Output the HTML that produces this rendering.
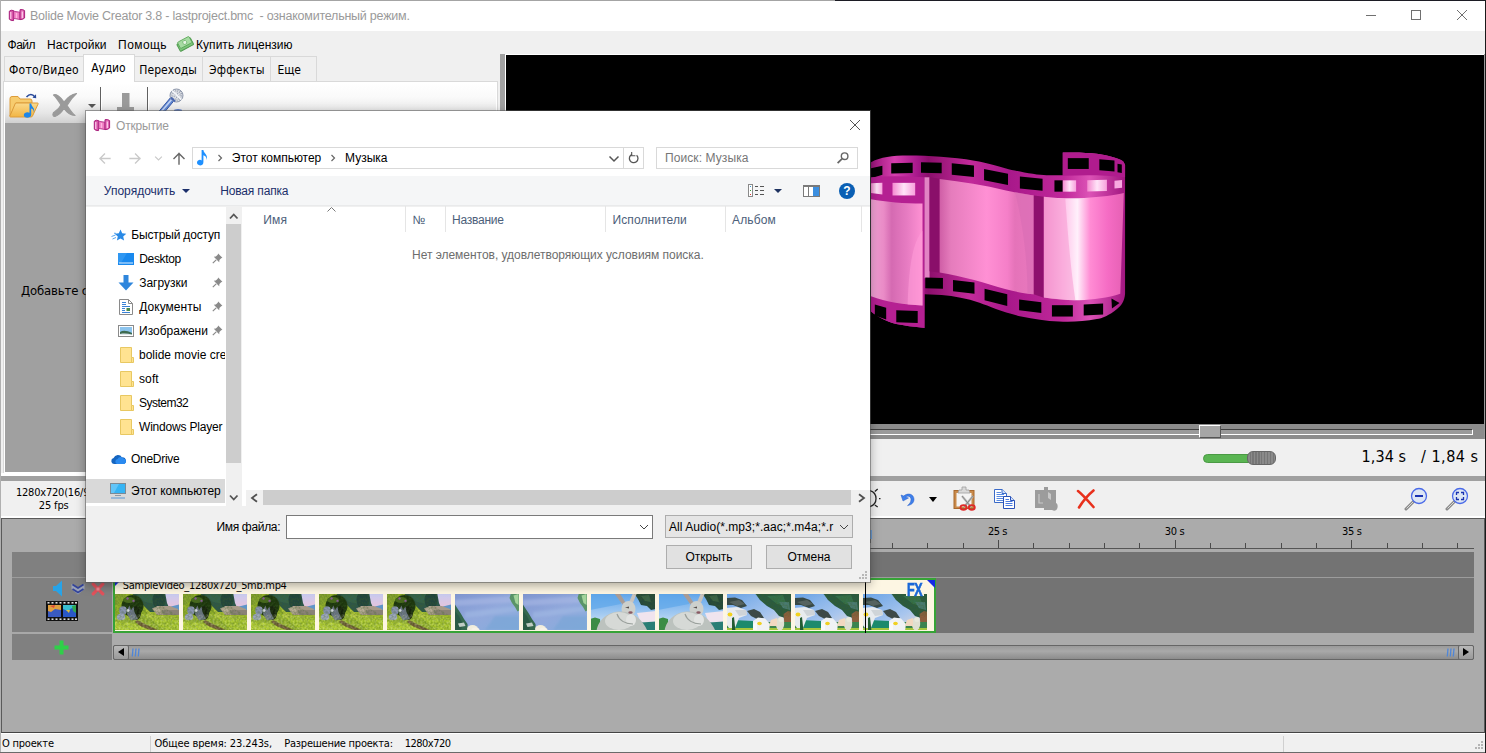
<!DOCTYPE html>
<html lang="ru"><head><meta charset="utf-8"><title>Bolide Movie Creator</title>
<style>
*{box-sizing:border-box;margin:0;padding:0}
html,body{width:1486px;height:753px;overflow:hidden;background:#f0f0f0}
body{font-family:"Liberation Sans",sans-serif;font-size:13px;color:#000;position:relative}
.a{position:absolute;white-space:nowrap}
.t{position:absolute;white-space:nowrap;line-height:1}
#titlebar{left:0;top:0;width:1486px;height:31px;background:#fff}
#menubar{left:0;top:31px;width:1486px;height:24px;background:#f0f0f0}
.tab{position:absolute;top:56px;height:26px;background:#f0f0f0;border:1px solid #d9d9d9;border-bottom:none;font-size:11px;font-family:"DejaVu Sans Condensed","Liberation Sans",sans-serif;line-height:23px;text-align:center;white-space:nowrap}
.tab.act{top:54px;height:28px;background:#fff;border-color:#d9d9d9;z-index:2;line-height:24px}

#dlg{left:86px;top:111px;width:784px;height:471px;background:#f0f0f0;box-shadow:0 0 0 1px rgba(90,90,90,.55),0 3px 10px rgba(0,0,0,.35);z-index:50;font-size:12px}
#dlg .t{font-size:12px}
.nav{position:absolute;white-space:nowrap;line-height:1;font-size:12px;color:#000}
.hdr{position:absolute;white-space:nowrap;line-height:1;font-size:12px;color:#4c607a;top:103px}
.csep{position:absolute;top:95px;width:1px;height:26px;background:#e5e5e5}
.btn{position:absolute;height:24px;border:1px solid #adadad;background:#e1e1e1;text-align:center;line-height:22px;font-size:12px}
</style></head><body>

<svg width="0" height="0" style="position:absolute">
<defs>
<filter id="b1" x="-10%" y="-10%" width="120%" height="120%"><feGaussianBlur stdDeviation="0.7"/></filter>
<filter id="tx" x="0" y="0" width="100%" height="100%"><feTurbulence type="fractalNoise" baseFrequency="0.45" numOctaves="2" seed="7" result="n"/><feColorMatrix in="n" type="matrix" values="0 0 0 0 0.05  0 0 0 0 0.12  0 0 0 0 0.02  1.6 0 0 0 -0.55" result="c"/><feComposite in="c" in2="SourceGraphic" operator="in"/></filter><filter id="ty" x="0" y="0" width="100%" height="100%"><feTurbulence type="fractalNoise" baseFrequency="0.5" numOctaves="2" seed="11" result="n"/><feColorMatrix in="n" type="matrix" values="0 0 0 0 0.95  0 0 0 0 1  0 0 0 0 0.55  0 1.6 0 0 -0.6" result="c"/><feComposite in="c" in2="SourceGraphic" operator="in"/></filter>
<filter id="b2" x="-10%" y="-10%" width="120%" height="120%"><feGaussianBlur stdDeviation="1.2"/></filter>
<linearGradient id="skyA" x1="0" y1="0" x2="0" y2="1"><stop offset="0" stop-color="#c4ccf2"/><stop offset="1" stop-color="#e6c4dc"/></linearGradient>
<linearGradient id="grassA" x1="0" y1="0" x2="0" y2="1"><stop offset="0" stop-color="#8aa628"/><stop offset="1" stop-color="#b4cc36"/></linearGradient>
<linearGradient id="skyB" x1="0" y1="0" x2="1" y2="1"><stop offset="0" stop-color="#8096d0"/><stop offset="0.5" stop-color="#92a9dc"/><stop offset="1" stop-color="#86addc"/></linearGradient>
<linearGradient id="skyC" x1="0" y1="0" x2="0" y2="1"><stop offset="0" stop-color="#62a6ea"/><stop offset="0.6" stop-color="#a8cdf2"/><stop offset="1" stop-color="#e4eefa"/></linearGradient>
<linearGradient id="skyD" x1="0" y1="0" x2="1" y2="1"><stop offset="0" stop-color="#6aa4e6"/><stop offset="0.6" stop-color="#a9c6ee"/><stop offset="1" stop-color="#eedcd2"/></linearGradient>
<symbol id="thA" viewBox="0 0 64 36" preserveAspectRatio="none">
 <rect width="64" height="36" fill="url(#grassA)"/>
 <g filter="url(#b1)">
 <rect x="18" y="-2" width="48" height="20" fill="#2d5648"/>
 <path d="M20 -2H40L44 4L40 10L30 8Z" fill="#35624e"/>
 <path d="M50 -2H66V14L60 13L54 13.500L52 9Z" fill="url(#skyA)"/>
 <path d="M56 12.500L66 10V17H56Z" fill="#5f95c8"/>
 <ellipse cx="44" cy="6" rx="6.500" ry="9" fill="#24443c"/>
 <path d="M-2 -2H13L21 3L30 13L36 19L46 24L66 23V38H-2Z" fill="#93b02a"/>
 <path d="M-2 -2H12L9 5L4 10L-2 12Z" fill="#88a52e"/>
 <ellipse cx="17.500" cy="12" rx="11" ry="11" fill="#1f350e"/>
 <ellipse cx="21" cy="19" rx="5" ry="7" fill="#142208"/>
 <ellipse cx="14" cy="6" rx="6" ry="3" fill="#486a1c"/>
 <circle cx="12.500" cy="4.500" r="1.200" fill="#8a5a9a"/><circle cx="18.500" cy="7" r="1.200" fill="#8a5a9a"/>
 <path d="M37 14.500L43 12L55 12L63 15V21H42Z" fill="#a79a88"/>
 <path d="M47 16H64V21H48Z" fill="#8a8276"/>
 <path d="M38 14.500L43 12L47 16L42 20Z" fill="#b8ac98"/>
 <ellipse cx="8" cy="16.500" rx="3.800" ry="4.200" fill="#8a94b2"/>
 <ellipse cx="6" cy="23" rx="4.200" ry="3.200" fill="#98a2bc"/>
 <path d="M12.500 15L14.500 11.500L16 16L18.500 12.500L19.500 18L23 25L16 26.500L12 20Z" fill="#6c7488"/>
 <circle cx="13" cy="16.500" r="1.500" fill="#d8dce4"/>
 <path d="M22 26L34 32L44 36.500H31L20 28Z" fill="#6a5630"/>
 <path d="M-2 27L20 30L40 38H-2Z" fill="#b0cc32"/>
 <path d="M28 20L44 24L66 24V38H52Z" fill="#a4c22c"/>
 <path d="M30 14L36 19L42 23L34 24Z" fill="#b4c83a"/>
 </g>
 <path d="M0 0H50V14L64 22V36H0Z" filter="url(#tx)" opacity=".55"/>
 <path d="M0 22L30 20L64 24V36H0Z" filter="url(#ty)" opacity=".45"/>
</symbol>
<symbol id="thB" viewBox="0 0 64 36" preserveAspectRatio="none">
 <rect width="64" height="36" fill="url(#skyB)"/>
 <g filter="url(#b2)"><path d="M0 6L64 2V8L0 12Z" fill="#a8b8e4" opacity=".6"/><path d="M10 18L64 12V17L10 24Z" fill="#a4bce6" opacity=".5"/><path d="M40 22H64V36H30Z" fill="#74a4d6" opacity=".55"/></g>
 <g filter="url(#b1)">
 <path d="M56 -1H65V16L62.500 17.500L60 13L57 9L54.500 4Z" fill="#5a9468"/>
 <path d="M58.500 1.500L63.500 0V11L60.500 9Z" fill="#a4d49c"/>
 <path d="M-1 9L1.500 13L5.500 19L9 25L12.500 30L13 37H-1Z" fill="#34684e"/>
 <path d="M-1 16L4 22L8 30L6 36H-1Z" fill="#2c5a44"/>
 <path d="M3 29.500L9 28.500L10.500 32L4.500 33Z" fill="#c0cdc4"/>
 <ellipse cx="17.500" cy="35" rx="5.500" ry="4" fill="#f1eddc"/>
 <ellipse cx="20.500" cy="36" rx="4" ry="2.500" fill="#f6f2e6"/>
 </g>
</symbol>
<symbol id="thC" viewBox="0 0 64 36" preserveAspectRatio="none">
 <rect width="64" height="36" fill="url(#skyC)"/>
 <g filter="url(#b1)">
 <path d="M-1 -1H30V10L-1 16Z" fill="#5ea6ea" opacity=".7"/>
 <path d="M43 -1H65V15L60 16L56 12L50 11L47 5Z" fill="#28493a"/>
 <path d="M50 2L58 1L60 8L54 7Z" fill="#3a6248"/>
 <path d="M46 19L65 17V29H50Z" fill="#f0e4ee"/>
 <path d="M-1 25L4 23.500L9 25L10 37H-1Z" fill="#3a8c44"/>
 <path d="M50 28.500L65 27.500V37H50Z" fill="#2c7e74"/>
 <path d="M23 -1L28.500 -1L34.500 8.500L31.500 10.500Z" fill="#a89c96"/>
 <path d="M37.500 9.500L42 -1L46 -1L41 11Z" fill="#c8c2bc"/>
 <ellipse cx="37.500" cy="15" rx="7" ry="8" fill="#cdd0cc"/>
 <path d="M5.500 37C7 25 18 17.500 30 17.500C44 17.500 52 27 56.500 37Z" fill="#bcc2be"/>
 <ellipse cx="28" cy="27" rx="14" ry="9" fill="#d6d9d6"/>
 <ellipse cx="40" cy="26" rx="5" ry="6" fill="#e2e4e2"/>
 <path d="M34 13.500L38 12.500L38 14.500Z" fill="#56504e"/>
 <ellipse cx="39.500" cy="18.500" rx="2.200" ry="1.300" fill="#8a5a64"/>
 <path d="M26 20C28 26 34 30 42 30" stroke="#9aa09c" stroke-width="1.200" fill="none"/>
 </g>
 <path d="M43 0H64V15L56 12L47 5Z" filter="url(#tx)" opacity=".5"/>
</symbol>
<symbol id="thD" viewBox="0 0 64 36" preserveAspectRatio="none">
 <rect width="64" height="36" fill="url(#skyD)"/>
 <g filter="url(#b1)">
 <path d="M28 -1H65V22L58 24L52 22L47 16L40 12L33 6Z" fill="#2a5a40"/>
 <path d="M40 2L56 1L60 12L50 10Z" fill="#35704c"/>
 <path d="M52 8L62 8L63 16L56 14Z" fill="#4a7a70"/>
 <path d="M56.500 20L61 17L65 18V37H58Z" fill="#8c5e3e"/>
 <path d="M-1 28H65V37H-1Z" fill="#3a8450"/>
 <path d="M6 26L26 27V34H6Z" fill="#1f8a6c"/>
 <path d="M-1 34H65V37H-1Z" fill="#a6c63a"/>
 <path d="M0 4L8 3.500L15 6L20 12L14 14L6 11L0 11Z" fill="#384844"/>
 <path d="M2 8L12 6L18 10L10 12Z" fill="#56645e"/>
 <path d="M-1 14L10 13L19 16L20 21L12 24L8 34L2 34L-1 30Z" fill="#e8ebee"/>
 <path d="M8 16L19 16L20 21L12 22Z" fill="#cfd4d8"/>
 <path d="M20 17L27 15L33 18L37 24L30 25L24 22Z" fill="#3c4a46"/>
 <ellipse cx="3" cy="20.500" rx="2.400" ry="2" fill="#f2d21c"/>
 <path d="M26 27L31 23.500L38 24.500L43 30L42 37H26Z" fill="#f0f2f4"/>
 <path d="M26 30L30 28L30 37H26Z" fill="#fafafa"/>
 <ellipse cx="32.500" cy="29.500" rx="2.300" ry="1.700" fill="#f0d020"/>
 <path d="M5 24L7 23L8.500 37H5Z" fill="#245c30"/>
 <ellipse cx="53" cy="30" rx="4.200" ry="6.500" fill="#dfe0d2"/>
 <ellipse cx="54" cy="25.500" rx="2.500" ry="2.500" fill="#e8e8dc"/>
 <path d="M44 26L50 24L50 32H42Z" fill="#f2d8c0"/>
 </g>
 <path d="M28 0H64V22L58 24L47 16L33 6Z" filter="url(#tx)" opacity=".5"/>
</symbol>
</defs></svg>
<!-- window frame -->
<div class="a" id="titlebar"></div>
<div class="a" style="left:0;top:0;width:835px;height:1px;background:#a4a4a4"></div><div class="a" style="left:835px;top:0;width:651px;height:1px;background:#1c1c24"></div>
<div class="a" style="left:0;top:0;width:1px;height:753px;background:#b0b0b0;z-index:60"></div><div class="a" style="left:0;top:752px;width:1486px;height:1px;background:#6a6a6a;z-index:60"></div>
<div class="a" style="left:1485px;top:0;width:1px;height:753px;background:#1a1a1a;z-index:60"></div>
<!-- title -->
<svg class="a" style="left:8px;top:8px" width="18" height="14" viewBox="8 8 18 14"><path d="M9.300 11.200Q11 9.600 13.600 10.600L13.600 20.600Q11 21 9.300 19.200Z" fill="#d654a6" stroke="#a8207c" stroke-width="1"/><path d="M13.600 11.200L20 12.200L20 19.600L13.600 18.400Z" fill="#ee7cc0" stroke="#b02a86" stroke-width=".8"/><path d="M20 9.700Q22.800 9 24.600 10.600L24.600 18Q22.800 19.800 20 19.600Z" fill="#e066b2" stroke="#a8207c" stroke-width="1"/><path d="M10.800 12V19M22.300 11.500V18" stroke="#ffd0ee" stroke-width="1.200"/><path d="M16.500 13V18" stroke="#ffb4e2" stroke-width="1.500"/></svg>
<div class="t" style="left:30.0px;top:10px;font-size:12.5px;color:#9a9a9a;letter-spacing:-0.23px">Bolide Movie Creator 3.8 - lastproject.bmc&nbsp; - ознакомительный режим.</div>
<svg class="a" style="left:1360px;top:5px" width="115" height="21" viewBox="0 0 115 21"><g stroke="#707070" stroke-width="1" fill="none"><path d="M6 10.5H16"/><rect x="51.5" y="5.5" width="9" height="9"/><path d="M97 5L107 15M107 5L97 15"/></g></svg>
<!-- menu -->
<div class="a" id="menubar"></div>
<div class="t" style="left:7.6px;top:38.7px;font-size:12px;letter-spacing:-0.54px">Файл</div>
<div class="t" style="left:47.1px;top:38.7px;font-size:12px;letter-spacing:0.07px">Настройки</div>
<div class="t" style="left:118.1px;top:38.7px;font-size:12px;letter-spacing:0.43px">Помощь</div>
<div class="t" style="left:196.1px;top:38.7px;font-size:12px;letter-spacing:0.02px">Купить лицензию</div>
<svg class="a" style="left:176px;top:36px" width="18" height="16" viewBox="0 0 18 16"><g transform="rotate(-28 9 8)"><rect x="1.500" y="4.500" width="15" height="8" rx="1" fill="#7cc47a" stroke="#4f9a4e"/><rect x="3" y="3" width="13" height="7" rx="1" fill="#a6dba2" stroke="#5aa658" stroke-width=".8"/><circle cx="9.500" cy="6.500" r="2" fill="#e8f6e6" stroke="#5aa658" stroke-width=".6"/></g></svg>
<!-- tabs -->
<div class="tab" style="left:4px;width:80px"></div>
<div class="tab act" style="left:83px;width:52px"></div>
<div class="tab" style="left:134px;width:69px"></div>
<div class="tab" style="left:202px;width:69px"></div>
<div class="tab" style="left:270px;width:47px"></div>
<div class="t" style="left:9.0px;top:64px;z-index:3;font-size:12px;font-family:&quot;DejaVu Sans Condensed&quot;,&quot;Liberation Sans&quot;,sans-serif;letter-spacing:0.24px">Фото/Видео</div>
<div class="t" style="left:91.3px;top:62px;z-index:3;font-size:12px;font-family:&quot;DejaVu Sans Condensed&quot;,&quot;Liberation Sans&quot;,sans-serif;letter-spacing:-0.14px">Аудио</div>
<div class="t" style="left:139.3px;top:64px;z-index:3;font-size:12px;font-family:&quot;DejaVu Sans Condensed&quot;,&quot;Liberation Sans&quot;,sans-serif;letter-spacing:0.05px">Переходы</div>
<div class="t" style="left:209.0px;top:64px;z-index:3;font-size:12px;font-family:&quot;DejaVu Sans Condensed&quot;,&quot;Liberation Sans&quot;,sans-serif;letter-spacing:0.25px">Эффекты</div>
<div class="t" style="left:277.6px;top:64px;z-index:3;font-size:12px;font-family:&quot;DejaVu Sans Condensed&quot;,&quot;Liberation Sans&quot;,sans-serif;letter-spacing:-0.12px">Еще</div>
<!-- left page -->
<div class="a" style="left:3px;top:81px;width:495px;height:393px;background:#fff;border:1px solid #d9d9d9"></div>
<div class="a" style="left:5px;top:83px;width:491px;height:40px;background:linear-gradient(#fff 0%,#fafafa 35%,#e6e6e6 75%,#d0d0d0 100%)"></div>
<div class="a" style="left:5px;top:123px;width:491px;height:349px;background:#a0a0a0"></div>
<div class="t" style="left:21px;top:284px;font-size:13px;font-family:&quot;DejaVu Sans Condensed&quot;,&quot;Liberation Sans&quot;,sans-serif;letter-spacing:-0.15px">Добавьте с</div>
<!-- preview -->
<div class="a" style="left:506px;top:55px;width:978px;height:370px;background:#000"></div>

<svg class="a" style="left:866px;top:145px" width="262" height="186" viewBox="0 0 1038.6 737.3">
<defs>
<linearGradient id="fs" gradientUnits="userSpaceOnUse" x1="0" y1="0" x2="1030" y2="0">
<stop offset="0.02" stop-color="#9a147a"/><stop offset="0.11" stop-color="#d63fae"/><stop offset="0.2" stop-color="#a6178a"/><stop offset="0.24" stop-color="#8c0f6c"/><stop offset="0.4" stop-color="#c22a9a"/><stop offset="0.55" stop-color="#a8188a"/><stop offset="0.76" stop-color="#c0289a"/><stop offset="0.86" stop-color="#dc52b6"/><stop offset="1" stop-color="#a0157f"/></linearGradient>
<linearGradient id="f1" gradientUnits="userSpaceOnUse" x1="292" y1="0" x2="665" y2="0">
<stop offset="0" stop-color="#cf5ea6"/><stop offset="0.12" stop-color="#e57cbc"/><stop offset="0.5" stop-color="#ff90d4"/><stop offset="0.72" stop-color="#f57fc8"/><stop offset="0.8" stop-color="#e573b9"/><stop offset="1" stop-color="#e878be"/></linearGradient>
<linearGradient id="f2" gradientUnits="userSpaceOnUse" x1="705" y1="0" x2="1022" y2="0">
<stop offset="0" stop-color="#f08ccb"/><stop offset="0.25" stop-color="#ffc4ea"/><stop offset="0.42" stop-color="#fff0fb"/><stop offset="0.58" stop-color="#ff8cd4"/><stop offset="0.8" stop-color="#f56cc4"/><stop offset="1" stop-color="#e660b4"/></linearGradient>
<linearGradient id="fc" gradientUnits="userSpaceOnUse" x1="20" y1="0" x2="225" y2="0">
<stop offset="0" stop-color="#f3a4d6"/><stop offset="0.25" stop-color="#e98ac6"/><stop offset="0.4" stop-color="#d56ab2"/><stop offset="0.7" stop-color="#e77cc2"/><stop offset="1" stop-color="#ff92d4"/></linearGradient>
<linearGradient id="fh" x1="0" y1="0" x2="1" y2="0"><stop offset="0" stop-color="#f48ad0"/><stop offset="0.5" stop-color="#ffe4f8"/><stop offset="1" stop-color="#f8a0dc"/></linearGradient>
</defs>
<path d="M20,68 C60,48 100,42 170,42 C250,42 340,48 430,62 C480,70 520,82 555,93 C600,105 680,120 715,120 L780,120 L780,30 C830,28 880,30 915,35 C965,42 1005,55 1020,65 L1027,78 L1027,590 C1025,620 1010,640 995,650 C965,675 935,688 915,690 C865,700 815,702 765,700 C715,698 665,690 615,680 C575,670 545,660 515,650 C490,640 470,632 450,625 C400,608 350,600 300,595 L232,592 L232,725 C190,722 150,716 120,710 C80,700 45,680 20,660 Z" fill="url(#fs)"/>
<path d="M780,30 C830,28 880,30 915,35 C965,42 1005,55 1020,65 L1027,78 L1027,128 C950,118 860,118 780,122 Z" fill="#b01c8e"/>
<polygon points="800,52 883,52 883,95 800,95" fill="#000"/>
<polygon points="925,56 985,61 985,105 925,100" fill="#000"/>
<polygon points="997,74 1014,77 1014,111 997,108" fill="#000"/>
<polygon points="20,92 65,82 65,118 20,132" fill="#000"/>
<polygon points="100,72 185,70 185,111 100,113" fill="#000"/>
<polygon points="218,68 300,70 300,112 218,110" fill="#000"/>
<polygon points="340,72 428,81 428,127 340,118" fill="#000"/>
<polygon points="468,95 563,114 563,159 468,140" fill="#000"/>
<polygon points="610,125 700,134 700,181 610,172" fill="#000"/>
<polygon points="747,140 780,140 780,185 747,185" fill="#000"/>
<polygon points="780,140 833,140 833,185 780,185" fill="url(#fh)"/>
<polygon points="877,140 955,138 955,182 877,184" fill="url(#fh)"/>
<polygon points="985,142 1015,139 1015,169 985,172" fill="#f8a8e0"/>
<path d="M20,128 C90,122 160,124 232,128 L232,725 C190,722 150,716 120,710 C80,700 45,680 20,660 Z" fill="#b52092"/>
<path d="M20,215 C80,226 150,232 224,232 L224,636 C150,634 80,622 20,600 Z" fill="url(#fc)"/>
<path d="M224,340 C190,380 170,460 165,632 L224,636 Z" fill="#ff9cd8" opacity=".55"/>
<polygon points="20,152 65,150 65,196 20,190" fill="url(#fh)"/>
<polygon points="105,150 195,150 195,200 105,200" fill="url(#fh)"/>
<polygon points="35,632 80,645 80,692 35,676" fill="#000"/>
<polygon points="120,655 205,658 205,706 120,703" fill="#000"/>
<rect x="232" y="128" width="20" height="400" fill="#e283c4"/>
<polygon points="252,128 292,134 292,506 252,500" fill="#8a0f6a"/>
<path d="M292,135 C380,145 470,160 555,180 C600,190 640,198 665,200 L665,592 C640,590 600,584 555,572 C470,545 380,520 292,505 Z" fill="url(#f1)"/>
<path d="M590,186 L665,200 L665,592 L640,590 C640,450 620,300 590,186Z" fill="#d96cb4" opacity=".6"/>
<polygon points="665,200 705,205 705,606 665,592" fill="#8e106e"/>
<path d="M705,205 C760,212 820,212 865,210 C930,206 990,198 1022,190 L1008,590 C960,606 900,614 845,615 C800,616 750,612 705,605 Z" fill="url(#f2)"/>
<path d="M705,205 C760,212 770,212 790,212 C800,350 810,480 830,615 C790,615 750,612 705,605Z" fill="#f59ad2" opacity=".55"/>
<polygon points="235,525 305,527 305,570 235,568" fill="#000"/>
<polygon points="345,535 430,545 430,590 345,580" fill="#000"/>
<polygon points="470,570 560,592 560,638 470,615" fill="#000"/>
<polygon points="607,612 695,623 695,666 607,655" fill="#000"/>
<polygon points="737,635 820,635 820,680 737,680" fill="#000"/>
<polygon points="863,632 940,628 940,672 863,676" fill="#000"/>
<polygon points="973,608 1005,626 975,648" fill="#000"/>
</svg>
<!-- splitter -->
<div class="a" style="left:498px;top:55px;width:8px;height:421px;background:#f0f0f0"></div>
<div class="a" style="left:500px;top:54px;width:5px;height:423px;background:#a0a0a0"></div>
<div class="a" style="left:505px;top:54px;width:1px;height:422px;background:#fff"></div>
<div class="a" style="left:505px;top:54px;width:980px;height:1px;background:#fff"></div>
<!-- seek slider band -->
<div class="a" style="left:506px;top:424px;width:979px;height:15px;background:#8c8c8c"></div><div class="a" style="left:1484px;top:54px;width:1px;height:385px;background:#9a9a9a"></div>
<div class="a" style="left:506px;top:429px;width:967px;height:6px;background:#9a9a9a;border-top:1px solid #404040;border-bottom:1px solid #fff;border-right:1px solid #fff"></div>
<div class="a" style="left:1199px;top:425px;width:22px;height:13px;background:#a6a6a6;border:1px solid;border-color:#fff #555 #555 #fff"></div>
<!-- time row -->
<div class="a" style="left:506px;top:439px;width:979px;height:37px;background:#f0f0f0"></div>
<div class="a" style="left:1203px;top:454px;width:50px;height:9px;border-radius:4.5px;background:#5ab552;border:1px solid #4a9a44"></div>
<div class="a" style="left:1247px;top:451px;width:29px;height:14px;border-radius:6px;border:1px solid #666;background:repeating-linear-gradient(90deg,#8a8a8a 0,#8a8a8a 1.6px,#767676 1.6px,#767676 2.9px)"></div>
<div class="t" style="left:1361.6px;top:449px;font-size:16px;font-family:&quot;DejaVu Sans Condensed&quot;,&quot;Liberation Sans&quot;,sans-serif;letter-spacing:0.06px">1,34 s</div>
<div class="t" style="left:1421.0px;top:449px;font-size:16px;font-family:&quot;DejaVu Sans Condensed&quot;,&quot;Liberation Sans&quot;,sans-serif;letter-spacing:0.50px">/ 1,84 s</div>
<!-- gray band under -->
<div class="a" style="left:1px;top:473px;width:499px;height:3px;background:#fff"></div>
<div class="a" style="left:1px;top:476px;width:1484px;height:5px;background:#a0a0a0"></div>
<!-- toolbar 2 -->
<div class="a" style="left:1px;top:481px;width:1484px;height:36px;background:#f0f0f0"></div>
<div class="a" style="left:1px;top:516px;width:1484px;height:2px;background:#fff"></div>
<div class="t" style="left:15.9px;top:486.5px;font-size:11px;font-family:&quot;DejaVu Sans Condensed&quot;,&quot;Liberation Sans&quot;,sans-serif;letter-spacing:-0.2px">1280x720(16/9</div>
<div class="t" style="left:38.8px;top:499.5px;font-size:11px;font-family:&quot;DejaVu Sans Condensed&quot;,&quot;Liberation Sans&quot;,sans-serif;letter-spacing:-0.15px">25 fps</div>

<!-- top toolbar icons -->
<svg class="a" style="left:8px;top:90px" width="32" height="30" viewBox="0 0 32 30">
 <defs><linearGradient id="fo" x1="0" y1="0" x2="0" y2="1"><stop offset="0" stop-color="#fbd98a"/><stop offset="1" stop-color="#f2b544"/></linearGradient></defs>
 <path d="M2 8.5Q2 6.5 4 6.5H10L12 9H22Q24 9 24 11V13H8L2 26Z" fill="#f7cc6e" stroke="#dd9c3a" stroke-width="1"/>
 <path d="M7.5 13H29.5Q30.5 13 30 14.2L24.5 26Q24 27 23 27H2.5Q1.5 27 2 25.8Z" fill="url(#fo)" stroke="#dd9c3a" stroke-width="1"/>
 <path d="M18.5 7Q23 2 27 7" fill="none" stroke="#2a4a9a" stroke-width="1.6"/><path d="M24.5 7.8L28.2 8.2L28 4.2Z" fill="#2a4a9a"/>
 <path d="M21.5 13.5L23.2 13.5C23.5 17 27.5 18 25.8 22.5C26 19.5 24 18.8 23.2 18.5V24.5C23.2 28.8 15.5 28.5 15.8 25C16 22.2 19.8 21.5 21.5 22.8Z" fill="#1e86e8"/>
</svg>
<svg class="a" style="left:51px;top:92px" width="27" height="26" viewBox="0 0 27 26"><path d="M2.500 3C5.500 1.500 8.500 4 13 10C16.500 5.500 20 2.500 25.500 1.500C21.500 5 18.500 9 16 13.500C18.500 17 21 21 24 23.500C19 23.500 15.500 20 13 16.500C11 19.500 8.500 23 4 24.500C1 24.500 1.500 20.500 4 19.500C6.500 18 8.500 16 10 13C7.500 9 5.500 5.500 2.500 3Z" fill="#9a9a9a" stroke="#9a9a9a" stroke-width="1.2" stroke-linejoin="round"/></svg>
<div class="a" style="left:88px;top:104px;border:4px solid transparent;border-top:4px solid #555;border-bottom:none;width:0;height:0"></div>
<div class="a" style="left:100px;top:87px;width:1px;height:30px;background:#606060"></div><div class="a" style="left:101px;top:87px;width:1px;height:30px;background:#fff"></div>
<div class="a" style="left:147px;top:87px;width:1px;height:30px;background:#606060"></div><div class="a" style="left:148px;top:87px;width:1px;height:30px;background:#fff"></div>
<svg class="a" style="left:116px;top:92px" width="20" height="24" viewBox="0 0 20 24"><path d="M6 1H13.5V15H18V19H1V15H6Z" fill="#9a9a9a"/></svg>
<svg class="a" style="left:154px;top:86px" width="32" height="30" viewBox="0 0 32 30">
 <path d="M4 26.500L17.500 10.500L21 13.500L8.500 28.500Z" fill="#5f86d2" stroke="#3a5aa6" stroke-width="1"/>
 <path d="M6.500 26.500L18.500 12.500" stroke="#c2d4f6" stroke-width="1.600"/>
 <circle cx="22.500" cy="9.500" r="6.500" fill="#e4e6ea" stroke="#8c96aa" stroke-width="1"/>
 <circle cx="22.500" cy="9.500" r="4.600" fill="none" stroke="#9aa2b2" stroke-width="3" stroke-dasharray="0.9 1.1"/>
 <circle cx="22.500" cy="9.500" r="1.800" fill="none" stroke="#9aa2b2" stroke-width="1.600" stroke-dasharray="0.9 1.1"/>
 <path d="M18 4.500L27.500 13.500" stroke="#f4f6fa" stroke-width="1.600"/>
 <path d="M17 11.500L21 15.500" stroke="#4866b2" stroke-width="1.800"/>
 <ellipse cx="24" cy="24.500" rx="4" ry="1.500" fill="#5a7cc8"/>
</svg>
<!-- bottom toolbar icons -->
<svg class="a" style="left:866px;top:488px" width="18" height="22" viewBox="0 0 18 22"><path d="M4 2.6A8.33 8.33 0 0 1 4 18.6" fill="none" stroke="#222" stroke-width="1.3"/><path d="M8.8 3.5L11.7 1M13 10.700H14.500M8.800 17L11.700 19" stroke="#222" stroke-width="1.300"/></svg>
<svg class="a" style="left:900px;top:492px" width="17" height="15" viewBox="0 0 17 15"><path d="M1 3L3 9L8.5 6L5.600 5C8 3.200 11 4.500 11 7.500C11 10 9.500 12 7.500 13.600C11.500 13 14.200 10.500 14 7C13.600 2 7.800 0.300 3.800 4Z" fill="#3f80ea" stroke="#2a5fc8" stroke-width=".5"/></svg>
<div class="a" style="left:929px;top:497px;border:4.5px solid transparent;border-top:5px solid #000;border-bottom:none;width:0;height:0"></div>
<svg class="a" style="left:953px;top:486px" width="23" height="25" viewBox="0 0 23 25">
 <rect x="1" y="4.5" width="20" height="18" fill="#c98a4a" stroke="#a8682c"/><rect x="3.5" y="7" width="15" height="13.5" fill="#f4f4f4"/>
 <path d="M9 1H13V4H16L17 7H5L6 4H9Z" fill="#d9d9d9" stroke="#a0a0a0" stroke-width=".8"/>
 <path d="M9 10L18 21M20 10L11 21" stroke="#b8b8b8" stroke-width="2"/><path d="M9 10L18 21M20 10L11 21" stroke="#777" stroke-width=".7"/>
 <ellipse cx="10.5" cy="21.5" rx="3" ry="2.3" fill="none" stroke="#e02828" stroke-width="1.8"/><ellipse cx="18.8" cy="21.5" rx="3" ry="2.3" fill="none" stroke="#e02828" stroke-width="1.8"/>
</svg>
<svg class="a" style="left:993px;top:488px" width="23" height="22" viewBox="0 0 23 22">
 <path d="M1.5 1.500H9L13.500 5.500V14.500H1.500Z" fill="#fff" stroke="#3a6ac8"/><path d="M9 1.500V5.500H13.500" fill="#cfe0fa" stroke="#3a6ac8"/><path d="M3.500 4.500H8M3.500 6.500H11M3.500 8.500H11M3.500 10.500H11M3.500 12.500H11" stroke="#5a8ae0" stroke-width="1"/>
 <path d="M10.500 8.500H17.500L21.500 12.500V20.500H10.500Z" fill="#fff" stroke="#2a52b8"/><path d="M17.500 8.500V12.500H21.500" fill="#cfe0fa" stroke="#2a52b8"/><path d="M12.500 11.500H16M12.500 13.500H19.500M12.500 15.500H19.500M12.500 17.500H19.500" stroke="#4a7ae0" stroke-width="1"/>
</svg>
<svg class="a" style="left:1034px;top:486px" width="24" height="26" viewBox="0 0 24 26"><path d="M1 4H10V1H14V4H22V17C24 18 24 21 23 23C22 25 20 25 18 24H10V22H1Z" fill="#9c9c9c"/><path d="M5 8V17H9" fill="none" stroke="#c8c8c8" stroke-width="1.2"/><path d="M14 6L17 8V14L14 12Z" fill="#c8c8c8"/></svg>
<svg class="a" style="left:1076px;top:489px" width="20" height="20" viewBox="0 0 20 20"><path d="M2 2C6 5 10 9.500 17.500 18M17.500 1.500C12 6 7 12 3 18.500" fill="none" stroke="#e8301c" stroke-width="2.6" stroke-linecap="round"/></svg>
<svg class="a" style="left:1404px;top:486px" width="26" height="26" viewBox="0 0 26 26"><path d="M2 23L10 15" stroke="#8a8a8a" stroke-width="3" stroke-linecap="round"/><path d="M2.500 22.500L9.500 15.500" stroke="#d8d8d8" stroke-width="1"/><circle cx="15" cy="10" r="7.500" fill="#dde6f4" stroke="#4a6ae8" stroke-width="1.300"/><rect x="11" y="9" width="8" height="2" fill="#1a32b0"/></svg>
<svg class="a" style="left:1445px;top:486px" width="26" height="26" viewBox="0 0 26 26"><path d="M2 23L10 15" stroke="#8a8a8a" stroke-width="3" stroke-linecap="round"/><path d="M2.500 22.500L9.500 15.500" stroke="#d8d8d8" stroke-width="1"/><circle cx="15" cy="10" r="7.500" fill="#dde6f4" stroke="#4a6ae8" stroke-width="1.300"/><path d="M11.500 9V6.500H14M16 6.500H18.500V9M18.500 11V13.500H16M14 13.500H11.500V11" fill="none" stroke="#1a32b0" stroke-width="1.300"/></svg>
<!-- timeline -->
<div class="a" id="tl" style="left:1px;top:518px;width:1484px;height:215px;background:#ababab;border:1px solid #5a5a5a;border-bottom-color:#444"></div>
<div class="a" style="left:12px;top:552px;width:1462px;height:81px;background:#737373"></div>
<div class="a" style="left:12px;top:552px;width:100px;height:108px;background:#808080"></div>
<div class="a" style="left:12px;top:577px;width:1462px;height:1px;background:#9c9c9c"></div>
<div class="a" style="left:12px;top:632px;width:100px;height:2px;background:#a8a8a8"></div>
<div class="a" style="left:112px;top:552px;width:2px;height:108px;background:#ababab"></div>
<div class="a" style="left:112px;top:633px;width:1364px;height:30px;background:#ababab"></div>
<!-- ruler -->
<div class="a" id="ruler" style="left:866px;top:519px;width:608px;height:30px;border-bottom:1px solid #555"></div>
<!-- clip -->
<div class="a" style="left:113px;top:578px;width:823px;height:55px;background:#fdf6e3;border:2px solid #36a336"></div>
<div class="t" style="left:122.8px;top:580px;font-size:11px;font-family:&quot;DejaVu Sans Condensed&quot;,&quot;Liberation Sans&quot;,sans-serif;letter-spacing:-0.30px">SampleVideo_1280x720_5mb.mp4</div>
<svg class="a" style="left:115px;top:594px" width="64" height="36"><use href="#thA" width="64" height="36"/></svg>
<svg class="a" style="left:183px;top:594px" width="64" height="36"><use href="#thA" width="64" height="36"/></svg>
<svg class="a" style="left:251px;top:594px" width="64" height="36"><use href="#thA" width="64" height="36"/></svg>
<svg class="a" style="left:319px;top:594px" width="64" height="36"><use href="#thA" width="64" height="36"/></svg>
<svg class="a" style="left:387px;top:594px" width="64" height="36"><use href="#thA" width="64" height="36"/></svg>
<svg class="a" style="left:455px;top:594px" width="64" height="36"><use href="#thB" width="64" height="36"/></svg>
<svg class="a" style="left:523px;top:594px" width="64" height="36"><use href="#thB" width="64" height="36"/></svg>
<svg class="a" style="left:591px;top:594px" width="64" height="36"><use href="#thC" width="64" height="36"/></svg>
<svg class="a" style="left:659px;top:594px" width="64" height="36"><use href="#thC" width="64" height="36"/></svg>
<svg class="a" style="left:727px;top:594px" width="64" height="36"><use href="#thD" width="64" height="36"/></svg>
<svg class="a" style="left:795px;top:594px" width="64" height="36"><use href="#thD" width="64" height="36"/></svg>
<svg class="a" style="left:863px;top:594px" width="64" height="36"><use href="#thD" width="64" height="36"/></svg>
<div class="a" style="left:115px;top:580px;width:0;height:0;border-top:6px solid #1428e6;border-right:6px solid transparent"></div>
<div class="a" style="left:927px;top:580px;width:0;height:0;border-top:8px solid #1428e6;border-left:8px solid transparent"></div>
<div class="a" style="left:906px;top:582px;width:18px;height:14px;background:#fdf6e3"></div><div class="t" style="left:907px;top:579.5px;color:#1a68d8;font-weight:bold;font-size:19px;transform-origin:0 0;transform:scaleX(0.66);letter-spacing:-0.5px;-webkit-text-stroke:0.7px #1a68d8">FX</div>
<div class="a" style="left:864.7px;top:578px;width:1.4px;height:55px;background:#000"></div>
<div class="a" style="left:892.0px;top:543px;width:1px;height:5px;background:#4a4a4a"></div>
<div class="a" style="left:927.3px;top:543px;width:1px;height:5px;background:#4a4a4a"></div>
<div class="a" style="left:962.6px;top:543px;width:1px;height:5px;background:#4a4a4a"></div>
<div class="a" style="left:998.0px;top:540px;width:1px;height:8px;background:#4a4a4a"></div>
<div class="t" style="left:987.9px;top:526px;font-size:11px;font-family:&quot;DejaVu Sans Condensed&quot;,&quot;Liberation Sans&quot;,sans-serif;letter-spacing:-0.43px">25 s</div>
<div class="a" style="left:1033.3px;top:543px;width:1px;height:5px;background:#4a4a4a"></div>
<div class="a" style="left:1068.6px;top:543px;width:1px;height:5px;background:#4a4a4a"></div>
<div class="a" style="left:1103.9px;top:543px;width:1px;height:5px;background:#4a4a4a"></div>
<div class="a" style="left:1139.3px;top:543px;width:1px;height:5px;background:#4a4a4a"></div>
<div class="a" style="left:1174.6px;top:540px;width:1px;height:8px;background:#4a4a4a"></div>
<div class="t" style="left:1164.7px;top:526px;font-size:11px;font-family:&quot;DejaVu Sans Condensed&quot;,&quot;Liberation Sans&quot;,sans-serif;letter-spacing:-0.33px">30 s</div>
<div class="a" style="left:1209.9px;top:543px;width:1px;height:5px;background:#4a4a4a"></div>
<div class="a" style="left:1245.3px;top:543px;width:1px;height:5px;background:#4a4a4a"></div>
<div class="a" style="left:1280.6px;top:543px;width:1px;height:5px;background:#4a4a4a"></div>
<div class="a" style="left:1315.9px;top:543px;width:1px;height:5px;background:#4a4a4a"></div>
<div class="a" style="left:1351.2px;top:540px;width:1px;height:8px;background:#4a4a4a"></div>
<div class="t" style="left:1342.0px;top:526px;font-size:11px;font-family:&quot;DejaVu Sans Condensed&quot;,&quot;Liberation Sans&quot;,sans-serif;letter-spacing:-0.36px">35 s</div>
<div class="a" style="left:1386.6px;top:543px;width:1px;height:5px;background:#4a4a4a"></div>
<div class="a" style="left:1421.9px;top:543px;width:1px;height:5px;background:#4a4a4a"></div>
<div class="a" style="left:1457.2px;top:543px;width:1px;height:5px;background:#4a4a4a"></div>
<div class="a" style="left:113px;top:645px;width:1361px;height:15px;border:1px solid #666;border-radius:2px;background:linear-gradient(#9a9a9a,#a9a9a9 40%,#8c8c8c)"></div>
<div class="a" style="left:113px;top:645px;width:16px;height:15px;border:1px solid #666;border-radius:2px;background:linear-gradient(#b8b8b8,#9a9a9a)"></div>
<div class="a" style="left:1458px;top:645px;width:16px;height:15px;border:1px solid #666;border-radius:2px;background:linear-gradient(#b8b8b8,#9a9a9a)"></div>
<div class="a" style="left:118px;top:648px;border:4px solid transparent;border-right:6px solid #000;border-left:none;width:0;height:0"></div>
<div class="a" style="left:1463px;top:648px;border:4px solid transparent;border-left:6px solid #000;border-right:none;width:0;height:0"></div>
<svg class="a" style="left:131px;top:648px" width="10" height="9" viewBox="0 0 10 9"><path d="M2 0.500L1.300 8.500M5 0.500L4.300 8.500M8 0.500L7.300 8.500" stroke="#4f86d8" stroke-width="1.300"/></svg>
<svg class="a" style="left:1446px;top:648px" width="10" height="9" viewBox="0 0 10 9"><path d="M2 0.500L1.300 8.500M5 0.500L4.300 8.500M8 0.500L7.300 8.500" stroke="#4f86d8" stroke-width="1.300"/></svg>
<svg class="a" style="left:52px;top:580px" width="12" height="17" viewBox="0 0 12 17"><path d="M1 6H4L10 0.5V16.5L4 11H1Z" fill="#27a3e8"/></svg>
<svg class="a" style="left:71px;top:583px" width="14" height="12" viewBox="0 0 14 12"><path d="M0.500 1L7 5.500L13.500 1V6L7 11.500L0.500 6Z" fill="#9aa2b8"/><path d="M1.500 1.500L7 5L12.500 1.500M1.500 6L7 9.500L12.500 6" fill="none" stroke="#33449a" stroke-width="1.800"/></svg>
<svg class="a" style="left:91px;top:582px" width="14" height="14" viewBox="0 0 14 14"><path d="M2.200 2.200L11.800 11.800M11.800 2.200L2.200 11.800" stroke="#e4525c" stroke-width="3.200" stroke-linecap="round"/><rect x="5.500" y="5.500" width="3" height="3" fill="#f08890"/></svg>
<svg class="a" style="left:46px;top:601px" width="32" height="20" viewBox="0 0 32 20"><rect width="32" height="20" fill="#111"/><g fill="#ddd"><rect x="1.5" y="1" width="2" height="1.6"/><rect x="5.5" y="1" width="2" height="1.6"/><rect x="9.5" y="1" width="2" height="1.6"/><rect x="13.5" y="1" width="2" height="1.6"/><rect x="17.5" y="1" width="2" height="1.6"/><rect x="21.5" y="1" width="2" height="1.6"/><rect x="25.5" y="1" width="2" height="1.6"/><rect x="29" y="1" width="2" height="1.6"/><rect x="1.5" y="17.4" width="2" height="1.6"/><rect x="5.5" y="17.4" width="2" height="1.6"/><rect x="9.5" y="17.4" width="2" height="1.6"/><rect x="13.5" y="17.4" width="2" height="1.6"/><rect x="17.5" y="17.4" width="2" height="1.6"/><rect x="21.5" y="17.4" width="2" height="1.6"/><rect x="25.5" y="17.4" width="2" height="1.6"/><rect x="29" y="17.4" width="2" height="1.6"/></g><rect x="2" y="4" width="13" height="12" fill="#3a5ac0"/><path d="M2 4H15V9L9 8L5 11L2 10Z" fill="#e0a040"/><path d="M4 5L9 4L8 7Z" fill="#e04a3a"/><rect x="17" y="4" width="13" height="12" fill="#2a58c8"/><path d="M17 4H30V8L26 7L22 10L17 8Z" fill="#3ac0d0"/><path d="M26 5L30 4V12L27 10Z" fill="#30a850"/><path d="M20 9L24 9L23 12Z" fill="#e0c040"/></svg>
<svg class="a" style="left:54px;top:640px" width="15" height="15" viewBox="0 0 15 15"><path d="M5.5 0.5H9.5V5.5H14.5V9.5H9.5V14.5H5.5V9.5H0.5V5.5H5.5Z" fill="#2fd048"/></svg>
<div class="a" style="left:870px;top:530px;width:1.5px;height:9px;background:#6a9ad0"></div><div class="a" style="left:870px;top:539px;width:1px;height:4px;background:#555"></div>
<!-- status bar -->
<div class="a" style="left:1px;top:733px;width:1484px;height:20px;background:#f0f0f0;border-top:1px solid #fff"></div>
<div class="a" style="left:150px;top:736px;width:1px;height:16px;background:#d0d0d0"></div>
<div class="a" style="left:1283px;top:736px;width:1px;height:16px;background:#d0d0d0"></div>
<svg class="a" style="left:1474px;top:741px" width="10" height="10" viewBox="0 0 10 10" fill="#b4b4b4"><rect x="7" y="0" width="2" height="2"/><rect x="4" y="3" width="2" height="2"/><rect x="7" y="3" width="2" height="2"/><rect x="1" y="6" width="2" height="2"/><rect x="4" y="6" width="2" height="2"/><rect x="7" y="6" width="2" height="2"/></svg>
<div class="t" style="left:2.0px;top:738px;font-size:11px;font-family:&quot;DejaVu Sans Condensed&quot;,&quot;Liberation Sans&quot;,sans-serif;letter-spacing:-0.21px">О проекте</div>
<div class="t" style="left:154.5px;top:738px;font-size:11px;font-family:&quot;DejaVu Sans Condensed&quot;,&quot;Liberation Sans&quot;,sans-serif;letter-spacing:-0.10px">Общее время: 23.243s,</div>
<div class="t" style="left:284.3px;top:738px;font-size:11px;font-family:&quot;DejaVu Sans Condensed&quot;,&quot;Liberation Sans&quot;,sans-serif;letter-spacing:-0.24px">Разрешение проекта:</div>
<div class="t" style="left:404.8px;top:738px;font-size:11px;font-family:&quot;DejaVu Sans Condensed&quot;,&quot;Liberation Sans&quot;,sans-serif;letter-spacing:-0.53px">1280x720</div>

<div class="a" id="dlg">
 <div class="a" style="left:0;top:0;width:784px;height:65px;background:#fff"></div>
 <svg class="a" style="left:7px;top:7px" width="18" height="14" viewBox="8 8 18 14"><path d="M9.300 11.200Q11 9.600 13.600 10.600L13.600 20.600Q11 21 9.300 19.200Z" fill="#d654a6" stroke="#a8207c" stroke-width="1"/><path d="M13.600 11.200L20 12.200L20 19.600L13.600 18.400Z" fill="#ee7cc0" stroke="#b02a86" stroke-width=".8"/><path d="M20 9.700Q22.800 9 24.600 10.600L24.600 18Q22.800 19.800 20 19.600Z" fill="#e066b2" stroke="#a8207c" stroke-width="1"/><path d="M10.800 12V19M22.300 11.500V18" stroke="#ffd0ee" stroke-width="1.200"/><path d="M16.500 13V18" stroke="#ffb4e2" stroke-width="1.500"/></svg>
 <div class="t" style="left:30.0px;top:9px;color:#9a9a9a;letter-spacing:-0.18px">Открытие</div>
 <svg class="a" style="left:763px;top:8px" width="12" height="12" viewBox="0 0 12 12"><path d="M1 1L11 11M11 1L1 11" stroke="#555" stroke-width="1" fill="none"/></svg>
 <!-- nav arrows -->
 <svg class="a" style="left:12px;top:40px" width="90" height="16" viewBox="0 0 90 16" fill="none" stroke-linecap="square">
  <path d="M2 7.5H12M6.5 3L2 7.5L6.5 12" stroke="#c9c9c9" stroke-width="1.3"/>
  <path d="M32 7.5H42M37.5 3L42 7.5L37.5 12" stroke="#c9c9c9" stroke-width="1.3"/>
  <path d="M57.5 6L60.5 9L63.5 6" stroke="#c9c9c9" stroke-width="1.1"/>
  <path d="M81 13V2.5M76 7.5L81 2.5L86 7.5" stroke="#666" stroke-width="1.4"/>
 </svg>
 <!-- address box -->
 <div class="a" style="left:106px;top:36px;width:452px;height:22px;background:#fff;border:1px solid #d9d9d9"></div>
 <div class="a" style="left:537px;top:37px;width:1px;height:20px;background:#d9d9d9"></div>
 <svg class="a" style="left:110px;top:38px" width="14" height="18" viewBox="0 0 14 18"><path d="M5.6 1 L7.4 1 C7.6 4.5 12.5 5.5 10.6 11.2 C11 7.5 8.5 6.6 7.4 6.2 L7.4 13.2 C7.4 17.5 0.8 17.3 1 13.6 C1.2 10.8 4.4 10.3 5.6 11.4Z" fill="#1e90ff"/></svg>
 <svg class="a" style="left:131px;top:43px" width="6" height="8" viewBox="0 0 6 8"><path d="M1.5 1L4.5 4L1.5 7" stroke="#666" stroke-width="1.2" fill="none"/></svg>
 <div class="t" style="left:145.8px;top:41px;letter-spacing:-0.02px">Этот компьютер</div>
 <svg class="a" style="left:244px;top:43px" width="6" height="8" viewBox="0 0 6 8"><path d="M1.5 1L4.5 4L1.5 7" stroke="#666" stroke-width="1.2" fill="none"/></svg>
 <div class="t" style="left:259.0px;top:41px;letter-spacing:0.01px">Музыка</div>
 <svg class="a" style="left:522px;top:44px" width="12" height="8" viewBox="0 0 12 8"><path d="M1.5 1.5L6 6L10.5 1.5" stroke="#555" stroke-width="1.5" fill="none"/></svg>
 <svg class="a" style="left:541px;top:41px" width="13" height="13" viewBox="0 0 13 13"><path d="M9.6 3.2A4.3 4.3 0 1 1 5 2.4" stroke="#555" stroke-width="1.3" fill="none"/><path d="M6.2 0.6V5.2H10.6" stroke="#555" stroke-width="1.3" fill="none" transform="translate(-0.6,-0.6) scale(0.85)"/></svg>
 <!-- search -->
 <div class="a" style="left:570px;top:36px;width:202px;height:22px;background:#fff;border:1px solid #d9d9d9"></div>
 <div class="t" style="left:579.0px;top:41px;color:#767676;letter-spacing:0.09px">Поиск: Музыка</div>
 <svg class="a" style="left:750px;top:40px" width="14" height="14" viewBox="0 0 14 14"><circle cx="8.6" cy="5.2" r="3.3" stroke="#666" stroke-width="1.4" fill="none"/><path d="M6.2 7.6L1.6 12.2" stroke="#666" stroke-width="1.7"/></svg>
 <!-- command bar -->
 <div class="a" style="left:0;top:65px;width:784px;height:30px;background:#f5f6f7;border-bottom:1px solid #e9eaeb"></div>
 <div class="t" style="left:17.8px;top:74px;color:#1b2f6b;letter-spacing:0.01px">Упорядочить</div>
 <div class="a" style="left:96px;top:78px;border:4px solid transparent;border-top:4px solid #1b2f6b;border-bottom:none;width:0;height:0"></div>
 <div class="t" style="left:134.3px;top:74px;color:#1b2f6b;letter-spacing:-0.17px">Новая папка</div>
 <svg class="a" style="left:662px;top:72px" width="36" height="16" viewBox="0 0 36 16"><rect x="0.5" y="1.5" width="4" height="12" fill="#fff" stroke="#8a8a8a"/><path d="M7 3.5H10M12 3.5H16M7 7.5H10M12 7.5H16M7 11.5H10M12 11.5H16" stroke="#555" stroke-width="1"/><rect x="2" y="3" width="1" height="1" fill="#39c"/><rect x="2" y="7" width="1" height="1" fill="#393"/><rect x="2" y="11" width="1" height="1" fill="#d33"/><path d="M26 6H34L30 10Z" fill="#1e3260"/></svg>
 <svg class="a" style="left:717px;top:73px" width="17" height="14" viewBox="0 0 17 14"><rect x="0.5" y="1.5" width="16" height="11" fill="#fff" stroke="#7a7a7a"/><rect x="1" y="1" width="15" height="2" fill="#7a7a7a"/><rect x="5" y="3" width="1" height="9" fill="#7a7a7a"/><rect x="10" y="3" width="6" height="9" fill="#3c8fe0"/></svg>
 <div class="a" style="left:753px;top:72px;width:16px;height:16px;border-radius:8px;background:#0a5fb4;color:#fff;font-weight:bold;font-size:12px;line-height:16px;text-align:center">?</div>
 <!-- nav pane -->
 <div class="a" style="left:0;top:96px;width:140px;height:299px;background:#fff"></div>
 <div class="a" style="left:140px;top:96px;width:16px;height:299px;background:#f0f0f0"></div>
 <div class="a" style="left:140px;top:113px;width:15px;height:239px;background:#cdcdcd"></div>
 <svg class="a" style="left:143.3px;top:101.5px" width="9.5" height="7" viewBox="0 0 9.5 7"><path d="M1 5.500L4.750 1.500L8.500 5.500" stroke="#555" stroke-width="1.800" fill="none"/></svg>
 <svg class="a" style="left:143.3px;top:383.2px" width="9.5" height="7" viewBox="0 0 9.5 7"><path d="M1 1.500L4.750 5.500L8.500 1.500" stroke="#555" stroke-width="1.800" fill="none"/></svg>
 <div class="a" style="left:0;top:368px;width:139px;height:24px;background:#d9d9d9"></div>
<div class="a" style="left:0;top:96px;width:139px;height:299px;overflow:hidden"><div class="a" style="left:0;top:-96px;width:139px;height:471px">
<svg class="a" style="left:25px;top:118px" width="16" height="13" viewBox="0 0 16 13"><path d="M9.5 0.5L11.2 4.3L15.3 4.7L12.2 7.4L13.1 11.5L9.5 9.4L5.9 11.5L6.8 7.4L3.7 4.7L7.8 4.3Z" fill="#2a8ae6"/><path d="M0.5 7.5L4.5 6M1.5 10L5 8.5M3 4.2L5 4.4" stroke="#5aa6ee" stroke-width="1"/></svg>
<div class="nav" style="left:45.3px;top:118px;letter-spacing:-0.16px">Быстрый доступ</div>
<svg class="a" style="left:32px;top:142px" width="16" height="12" viewBox="0 0 16 12"><rect x="0" y="0" width="16" height="12" fill="#1989ee"/><path d="M0 0H9L3 10H0Z" fill="#3ea0f5" opacity=".6"/><rect x="1" y="9.5" width="14" height="1" fill="#dff0ff"/></svg>
<div class="nav" style="left:53.2px;top:142px;letter-spacing:-0.32px">Desktop</div>
<svg class="a" style="left:126px;top:142px" width="11" height="11" viewBox="0 0 11 11"><path d="M6.2 0.6L10.4 4.8L9.2 5.3L7.4 7.1L7.2 9.2L1.8 3.8L3.9 3.6L5.7 1.8Z" fill="#8a8a8a"/><path d="M4.2 6.8L0.8 10.2" stroke="#8a8a8a" stroke-width="1.2"/></svg>
<svg class="a" style="left:32px;top:164px" width="16" height="16" viewBox="0 0 16 16"><path d="M5.5 0H10.5V7.5H15.5L8 15.5L0.5 7.5H5.5Z" fill="#2f86dc"/></svg>
<div class="nav" style="left:53.2px;top:166px;letter-spacing:0.00px">Загрузки</div>
<svg class="a" style="left:126px;top:166px" width="11" height="11" viewBox="0 0 11 11"><path d="M6.2 0.6L10.4 4.8L9.2 5.3L7.4 7.1L7.2 9.2L1.8 3.8L3.9 3.6L5.7 1.8Z" fill="#8a8a8a"/><path d="M4.2 6.8L0.8 10.2" stroke="#8a8a8a" stroke-width="1.2"/></svg>
<svg class="a" style="left:33px;top:188px" width="14" height="16" viewBox="0 0 14 16"><path d="M0.5 0.5H9.5L13.5 4.5V15.5H0.5Z" fill="#fff" stroke="#8a8a8a"/><path d="M9.5 0.5V4.5H13.5" fill="none" stroke="#8a8a8a"/><path d="M3 3.5H7M3 5.5H7M3 7.5H11M3 9.5H6M3 11.5H6M3 13.5H11" stroke="#3b82d6" stroke-width="1"/><rect x="7.5" y="9" width="3.5" height="3" fill="#4b8a4b"/></svg>
<div class="nav" style="left:53.2px;top:190px;letter-spacing:0.04px">Документы</div>
<svg class="a" style="left:126px;top:190px" width="11" height="11" viewBox="0 0 11 11"><path d="M6.2 0.6L10.4 4.8L9.2 5.3L7.4 7.1L7.2 9.2L1.8 3.8L3.9 3.6L5.7 1.8Z" fill="#8a8a8a"/><path d="M4.2 6.8L0.8 10.2" stroke="#8a8a8a" stroke-width="1.2"/></svg>
<svg class="a" style="left:32px;top:214px" width="16" height="12" viewBox="0 0 16 12"><rect x="0.5" y="0.5" width="15" height="11" fill="#fff" stroke="#8a8a8a"/><rect x="2" y="2" width="12" height="8" fill="#8cc4ee"/><path d="M2 7C5 5 9 5.5 14 8V10H2Z" fill="#3d6b52"/><path d="M2 9C6 8 10 8.6 14 9.4V10H2Z" fill="#dfe8ee"/></svg>
<div class="nav" style="left:53px;top:214px">Изображени</div>
<svg class="a" style="left:126px;top:214px" width="11" height="11" viewBox="0 0 11 11"><path d="M6.2 0.6L10.4 4.8L9.2 5.3L7.4 7.1L7.2 9.2L1.8 3.8L3.9 3.6L5.7 1.8Z" fill="#8a8a8a"/><path d="M4.2 6.8L0.8 10.2" stroke="#8a8a8a" stroke-width="1.2"/></svg>
<svg class="a" style="left:34px;top:236px" width="14" height="16" viewBox="0 0 14 16"><path d="M0.5 0.5H11.5V10.5H13.5V15.5H0.5Z" fill="#ffe391" stroke="#e8c862" stroke-width="1"/><path d="M11.5 10.5V15" stroke="#e8c862"/></svg>
<div class="nav" style="left:53px;top:238px">bolide movie cre</div>
<svg class="a" style="left:34px;top:260px" width="14" height="16" viewBox="0 0 14 16"><path d="M0.5 0.5H11.5V10.5H13.5V15.5H0.5Z" fill="#ffe391" stroke="#e8c862" stroke-width="1"/><path d="M11.5 10.5V15" stroke="#e8c862"/></svg>
<div class="nav" style="left:53.0px;top:262px;letter-spacing:0.12px">soft</div>
<svg class="a" style="left:34px;top:284px" width="14" height="16" viewBox="0 0 14 16"><path d="M0.5 0.5H11.5V10.5H13.5V15.5H0.5Z" fill="#ffe391" stroke="#e8c862" stroke-width="1"/><path d="M11.5 10.5V15" stroke="#e8c862"/></svg>
<div class="nav" style="left:53.0px;top:286px;letter-spacing:-0.52px">System32</div>
<svg class="a" style="left:34px;top:308px" width="14" height="16" viewBox="0 0 14 16"><path d="M0.5 0.5H11.5V10.5H13.5V15.5H0.5Z" fill="#ffe391" stroke="#e8c862" stroke-width="1"/><path d="M11.5 10.5V15" stroke="#e8c862"/></svg>
<div class="nav" style="left:53.0px;top:310px;letter-spacing:-0.19px">Windows Player</div>
<svg class="a" style="left:24px;top:343px" width="17" height="10" viewBox="0 0 17 10"><path d="M4 10A3 3 0 0 1 3.6 4.1A4.6 4.6 0 0 1 12 3.4A3.4 3.4 0 0 1 13.6 10Z" fill="#1565c0"/><path d="M7 10A2.6 2.6 0 0 1 7.6 5A3.4 3.4 0 0 1 13.6 4.6A2.8 2.8 0 0 1 14.2 10Z" fill="#2a8af0"/></svg>
<div class="nav" style="left:45.0px;top:342px;letter-spacing:-0.28px">OneDrive</div>
<svg class="a" style="left:24px;top:372px" width="16" height="16" viewBox="0 0 16 16"><rect x="0.5" y="0.5" width="15" height="10" fill="#35b4f4" stroke="#7a8a96"/><path d="M1 1H9L4 10H1Z" fill="#7fd0fa" opacity=".6"/><rect x="5" y="12" width="6" height="1" fill="#8a9aa6"/><rect x="1" y="14.5" width="14" height="1" fill="#5a9ad6"/></svg>
<div class="nav" style="left:45px;top:374px">Этот компьютер</div>
</div></div>
 <!-- content -->
 <div class="a" style="left:156px;top:96px;width:628px;height:299px;background:#fff"></div>
 <div class="csep" style="left:319px"></div><div class="csep" style="left:359px"></div><div class="csep" style="left:519px"></div><div class="csep" style="left:639px"></div><div class="csep" style="left:775px"></div>
 <svg class="a" style="left:241px;top:96px" width="9" height="5" viewBox="0 0 9 5"><path d="M0.5 4.5L4.5 0.5L8.5 4.5" stroke="#777" stroke-width="1" fill="none"/></svg>
 <div class="hdr" style="left:177.3px;letter-spacing:0.16px">Имя</div>
 <div class="hdr" style="left:326.4px;letter-spacing:-0.27px">№</div>
 <div class="hdr" style="left:366.0px;letter-spacing:-0.23px">Название</div>
 <div class="hdr" style="left:526.5px;letter-spacing:0.11px">Исполнители</div>
 <div class="hdr" style="left:646.0px;letter-spacing:0.13px">Альбом</div>
 <div class="t" style="left:326.0px;top:138px;color:#6d6d6d;letter-spacing:-0.03px">Нет элементов, удовлетворяющих условиям поиска.</div>
 <!-- h scroll -->
 <div class="a" style="left:160px;top:379px;width:624px;height:16px;background:#f0f0f0"></div>
 <div class="a" style="left:177px;top:379px;width:588px;height:15px;background:#cdcdcd"></div>
 <svg class="a" style="left:164px;top:381.5px" width="9" height="10" viewBox="0 0 9 10"><path d="M7 1.200L2 5L7 8.800" stroke="#505050" stroke-width="1.800" fill="none"/></svg>
 <svg class="a" style="left:771px;top:381.500px" width="9" height="10" viewBox="0 0 9 10"><path d="M2 1.200L7 5L2 8.800" stroke="#505050" stroke-width="1.800" fill="none"/></svg>
 <!-- bottom -->
 <div class="t" style="left:130.4px;top:410px;letter-spacing:-0.31px">Имя файла:</div>
 <div class="a" style="left:200px;top:404px;width:367px;height:24px;background:#fff;border:1px solid #7a7a7a"></div>
 <svg class="a" style="left:553px;top:413px" width="10" height="6" viewBox="0 0 10 6"><path d="M1 1L5 5L9 1" stroke="#444" stroke-width="1" fill="none"/></svg>
 <div class="a" style="left:579px;top:404px;width:188px;height:23px;background:#e5e5e5;border:1px solid #adadad"></div>
 <div class="t" style="left:583.0px;top:410px;letter-spacing:0.05px">All Audio(*.mp3;*.aac;*.m4a;*.r</div>
 <svg class="a" style="left:753px;top:413px" width="10" height="6" viewBox="0 0 10 6"><path d="M1 1L5 5L9 1" stroke="#444" stroke-width="1" fill="none"/></svg>
 <div class="btn" style="left:580px;top:434px;width:86px">Открыть</div>
 <div class="btn" style="left:680px;top:434px;width:86px">Отмена</div>
 <svg class="a" style="left:773px;top:460px" width="9" height="9" viewBox="0 0 9 9" fill="#b8b8b8"><rect x="6" y="0" width="2" height="2"/><rect x="3" y="3" width="2" height="2"/><rect x="6" y="3" width="2" height="2"/><rect x="0" y="6" width="2" height="2"/><rect x="3" y="6" width="2" height="2"/><rect x="6" y="6" width="2" height="2"/></svg>
</div>
</body></html>
